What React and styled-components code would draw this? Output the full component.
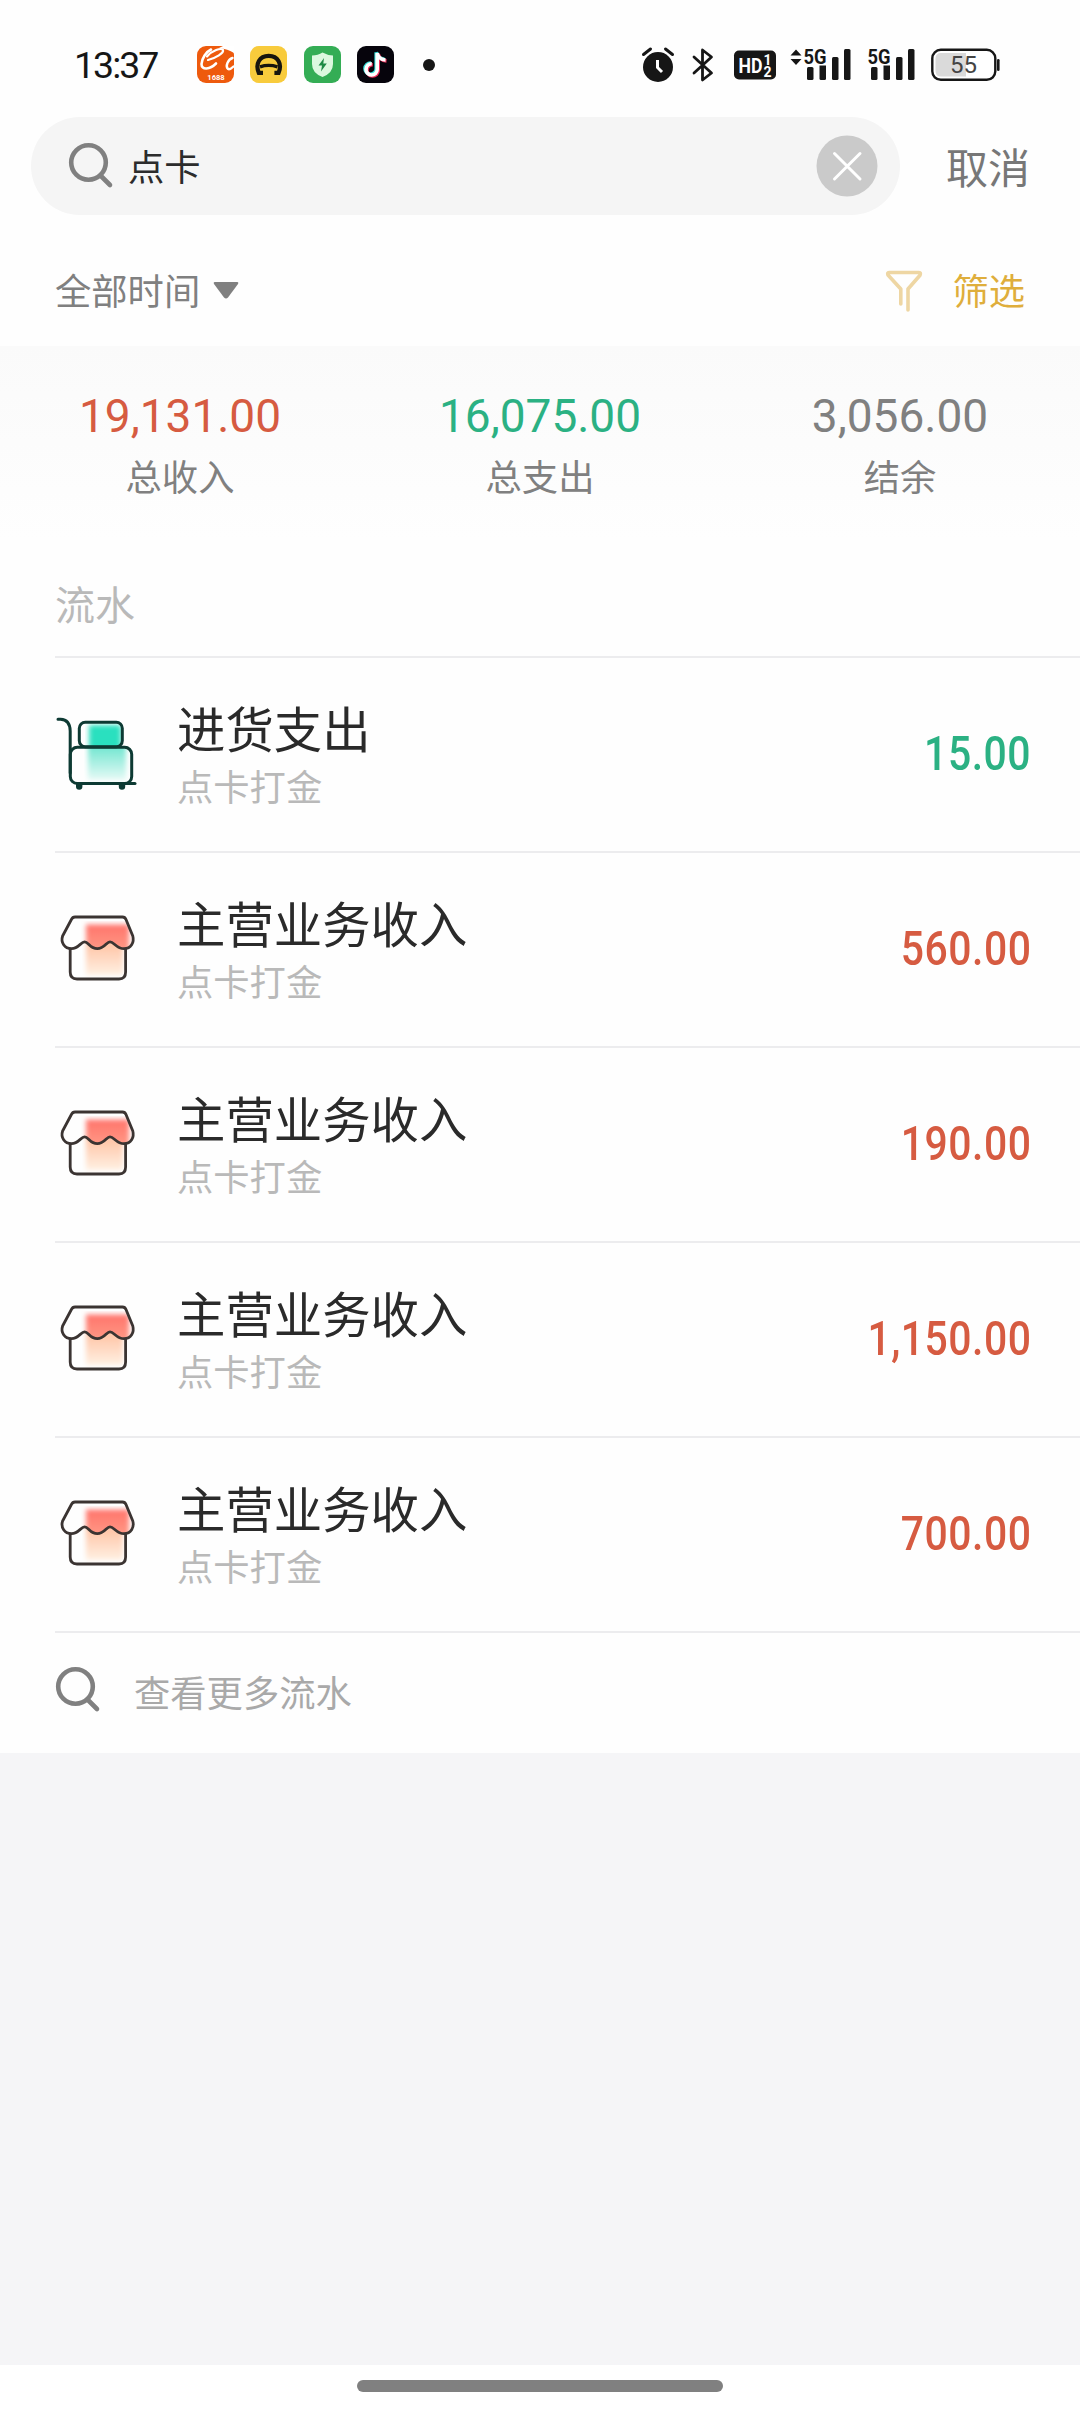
import React from 'react'
import styled, { createGlobalStyle } from 'styled-components'

const RED = '#d65b41'
const GREEN = '#2bb183'
const GREY_TEXT = '#808080'
const GREY_LIGHT = '#b9b9b9'
const INK = '#161616'
const LINE = '#ececee'

const GlobalStyle = createGlobalStyle`
  * {
    box-sizing: border-box;
  }
  body {
    margin: 0;
    background: #fff;
    font-family: Roboto, 'Noto Sans CJK SC', sans-serif;
    font-weight: 400;
  }
  svg {
    display: block;
    flex: none;
    overflow: visible;
  }
`

const Screen = styled('div')`
  display: flex;
  flex-direction: column;
  width: 1080px;
  height: 2414px;
  background: #fefefe;
  overflow: hidden;
`

const StatusBar = styled('header')`
  display: flex;
  align-items: center;
  height: 117px;
  padding: 12px 80px 0 74px;
`

const Clock = styled('span')`
  width: 123px;
  color: ${INK};
  font-size: 37.5px;
  line-height: 38px;
  letter-spacing: -2px;
`

const AppIcons = styled('div')`
  display: flex;
  align-items: center;
  gap: 16.4px;
`

const Dot = styled('i')`
  width: 12px;
  height: 12px;
  margin-left: 12px;
  border-radius: 50%;
  background: ${INK};
`

const SystemIcons = styled('div')`
  display: flex;
  align-items: center;
  margin-left: auto;
`

const SearchRow = styled('div')`
  display: flex;
  align-items: center;
  height: 98px;
  padding-left: 31px;
`

const SearchField = styled('div')`
  display: flex;
  align-items: center;
  width: 869px;
  height: 98px;
  padding: 0 22px 0 38px;
  border-radius: 49px;
  background: #f5f5f5;
`

const SearchText = styled('span')`
  flex: 1;
  margin: 6px 0 0 15px;
  color: #2c2c2c;
  font-size: 36.3px;
  line-height: 52px;
`

const Cancel = styled('span')`
  margin: 7px 0 0 46px;
  color: #777;
  font-size: 42px;
  line-height: 60px;
`

const FilterRow = styled('div')`
  display: flex;
  align-items: center;
  justify-content: space-between;
  height: 131px;
  padding: 22px 55px 0;
`

const FilterGroup = styled('div')`
  display: flex;
  align-items: center;
  gap: ${({ gap }) => gap}px;
  color: ${({ color }) => color};
`

const FilterText = styled('span')`
  margin-top: 3px;
  font-size: 36.3px;
  line-height: 52px;
`

const Summary = styled('section')`
  display: grid;
  grid-template-columns: repeat(3, 360px);
  height: 194px;
  padding-top: 40px;
  background: linear-gradient(#fafafa, #fefefe);
  text-align: center;
`

const Total = styled('div')`
  color: ${({ color }) => color};
  font-size: 46px;
  line-height: 60px;
`

const TotalLabel = styled('div')`
  margin-top: 7px;
  color: ${GREY_TEXT};
  font-size: 36.3px;
  line-height: 52px;
`

const SectionTitle = styled('h2')`
  height: 116px;
  margin: 0;
  padding: 38px 0 0 55px;
  color: ${GREY_LIGHT};
  font-size: 40px;
  font-weight: 400;
  line-height: 58px;
`

const List = styled('div')`
  margin-left: 55px;
  border-bottom: 2px solid ${LINE};
`

const Record = styled('div')`
  display: flex;
  align-items: center;
  height: 195px;
  padding-right: 49px;
  border-top: 2px solid ${LINE};
`

const IconSlot = styled('div')`
  margin: 0 1px 0 -1px;
`

const RecordText = styled('div')`
  flex: 1;
  margin-left: 38px;
  padding-top: 8px;
`

const RecordTitle = styled('div')`
  color: #2a2a2a;
  font-size: 48.4px;
  line-height: 60px;
`

const RecordNote = styled('div')`
  color: ${GREY_LIGHT};
  font-size: 36.3px;
  line-height: 53px;
`

const Amount = styled('div')`
  color: ${({ color }) => color};
  margin-top: -2px;
  font-size: 49px;
  font-weight: 500;
  line-height: 60px;
  letter-spacing: 0.6px;
  transform: scaleX(0.835);
  transform-origin: right;
`

const More = styled('div')`
  display: flex;
  align-items: center;
  height: 120px;
  padding: 0 0 6px 56px;
`

const MoreText = styled('span')`
  margin: 10px 0 0 34px;
  color: #a9a9a9;
  font-size: 36.3px;
  line-height: 52px;
`

const Filler = styled('div')`
  flex: 1;
  background: #f5f5f7;
`

const NavBar = styled('footer')`
  display: flex;
  justify-content: center;
  height: 49px;
  padding-top: 15px;
  background: #fff;
`

const NavHandle = styled('div')`
  width: 366px;
  height: 12px;
  border-radius: 6px;
  background: #808080;
`

const Spaced = styled('span')`
  display: block;
  margin-left: ${({ left }) => left}px;
`

const MagnifierIcon = () => (
  <svg width="44" height="46" viewBox="0 0 44 46" fill="none" stroke="#808080" strokeWidth="4.6">
    <circle cx="19.5" cy="19.5" r="17.3" />
    <path d="M31.5 32.5 L41 42" strokeLinecap="round" />
  </svg>
)

const ClearIcon = () => (
  <svg width="62" height="62" viewBox="0 0 62 62">
    <circle cx="31" cy="31" r="30.5" fill="#cacaca" />
    <path d="M18.5 18.5 L44 44 M44 18.5 L18.5 44" stroke="#fff" strokeWidth="3" strokeLinecap="round" />
  </svg>
)

const FunnelIcon = () => (
  <svg width="36" height="42" viewBox="0 0 36 42" fill="none" stroke="#eed6a3" strokeWidth="3.6" strokeLinejoin="round" strokeLinecap="round">
    <path d="M14.8 33 V18 L2 4 Q1 1.5 3 1.5 H33 Q35.2 1.5 34 4.2 L22 18 V39" />
  </svg>
)

const Icon1688 = () => (
  <svg width="37" height="37" viewBox="0 0 37 37">
    <rect width="37" height="37" rx="9" fill="#ee5a0d" />
    <g fill="none" stroke="#fff" strokeLinecap="round">
      <path d="M14 3.5 C9 6 5 12 4.5 18 C4.4 24.5 13 23.5 19 17.5" strokeWidth="2.6" />
      <path d="M10 10.5 C15 4.5 24 1.5 26 4 C27 7 19 12 11 14" strokeWidth="2.2" />
      <path d="M35.5 12 C31 13.5 28 20 31 23 C33 24 35 22 36.5 20.5" strokeWidth="2.4" />
    </g>
    <path d="M26 0 H37 V7 Q31 3 22 2 Z" fill="#fff" />
    <text x="19" y="33.5" fill="#fff" fontFamily="Roboto" fontSize="7.6" fontWeight="700" textAnchor="middle">1688</text>
  </svg>
)

const IconHorseshoe = () => (
  <svg width="37" height="37" viewBox="0 0 37 37">
    <rect width="37" height="37" rx="9" fill="#f8cb3c" />
    <path d="M13 26.8 H8.8 C5 18 9.5 9.8 18.7 9.8 C28 9.8 32.3 18 28.6 26.8 H24.4" fill="none" stroke="#17150e" strokeWidth="4.2" />
    <path d="M10 20.8 Q18.7 18 27.5 20.8" fill="none" stroke="#17150e" strokeWidth="3.4" />
  </svg>
)

const IconShield = () => (
  <svg width="37" height="37" viewBox="0 0 37 37">
    <rect width="37" height="37" rx="9" fill="#34ad55" />
    <path d="M18.5 6.5 Q24 9.5 29 9.5 V18 Q29 27 18.5 31 Q8 27 8 18 V9.5 Q14 9.5 18.5 6.5 Z" fill="#dcf8df" />
    <path d="M20 12 L14.5 19.5 H18 L17 25.5 L22.8 17.5 H19.3 Z" fill="#1d8a45" />
  </svg>
)

const NOTE = 'M20.2 7 V23.5 A5.6 5.6 0 1 1 14.8 17.8 M20.2 7 Q21.5 13.6 28.5 14'

const IconNote = () => (
  <svg width="37" height="37" viewBox="0 0 37 37">
    <rect width="37" height="37" rx="9" fill="#06040c" />
    <g fill="none" strokeWidth="3.6">
      <path d={NOTE} stroke="#3be0dc" transform="translate(-1 -.8)" />
      <path d={NOTE} stroke="#ee2f5b" transform="translate(1 .9)" />
      <path d={NOTE} stroke="#fff" />
    </g>
  </svg>
)

const AlarmIcon = () => (
  <svg width="32" height="36" viewBox="0 0 32 36">
    <circle cx="16" cy="20" r="15" fill={INK} />
    <path d="M1.5 7.5 L8.5 2 M30.5 7.5 L23.5 2" stroke={INK} strokeWidth="3" strokeLinecap="round" />
    <path d="M15.5 13 V20.5 L20 25" fill="none" stroke="#fff" strokeWidth="3" />
  </svg>
)

const BluetoothIcon = () => (
  <svg width="22" height="36" viewBox="0 0 22 36" fill="none" stroke={INK} strokeWidth="2.8">
    <path d="M2 10 L19.5 26 L10.5 33 V3 L19.5 10 L2 26" strokeLinejoin="round" strokeLinecap="round" />
  </svg>
)

const HdIcon = () => (
  <svg width="42" height="30" viewBox="0 0 42 30" fontFamily="Roboto" fontWeight="700">
    <rect width="42" height="29" y=".5" rx="5" fill={INK} />
    <text x="4.5" y="22.5" fill="#fff" fontSize="21" textLength="24" lengthAdjust="spacingAndGlyphs">HD</text>
    <text x="29.5" y="15" fill="#fff" fontSize="14">1</text>
    <text x="29.5" y="26.5" fill="#fff" fontSize="14">2</text>
  </svg>
)

const SignalIcon = ({ arrows = false }) => (
  <svg width={arrows ? 61 : 48} height="36" viewBox={arrows ? '-14 0 61 36' : '-1 0 48 36'} fill={INK}>
    {arrows && <path d="M-13.5 8.5 L-8 2.5 L-2.5 8.5 Z M-13.5 12 L-8 18 L-2.5 12 Z" />}
    <text x="-.5" y="16.5" fontFamily="Roboto" fontSize="21" fontWeight="700" textLength="23" lengthAdjust="spacingAndGlyphs">5G</text>
    <rect x="3" y="20" width="6.5" height="13" rx="1.5" />
    <path d="M15.5 18.5 H22 V31.5 Q22 33 20.5 33 H17 Q15.5 33 15.5 31.5 Z" />
    <rect x="28" y="10" width="6.5" height="23" rx="1.5" />
    <rect x="40" y="2" width="6.5" height="31" rx="1.5" />
  </svg>
)

const BatteryIcon = () => (
  <svg width="69" height="34" viewBox="0 0 69 34">
    <rect x="1.3" y="1.8" width="63" height="30" rx="8.5" fill="#fff" stroke={INK} strokeWidth="2.4" />
    <path d="M10 5 H35 V28.5 H10 Q4.5 28.5 4.5 23 V10.5 Q4.5 5 10 5 Z" fill="#dadada" />
    <rect x="66" y="11" width="2.6" height="12" rx="1.3" fill={INK} />
    <text x="32.5" y="25" fill="#444" fontFamily="Roboto" fontSize="24" textAnchor="middle">55</text>
  </svg>
)

const TrolleyIcon = () => (
  <svg width="84" height="85" viewBox="0 0 84 85">
    <defs>
      <linearGradient id="trolley" x1="0" y1="0" x2="0" y2="1">
        <stop offset="0" stopColor="#62e3cb" />
        <stop offset="1" stopColor="#e6faf6" />
      </linearGradient>
      <clipPath id="trolleyTop"><rect x="25.3" y="10.3" width="43" height="24.5" rx="6" /></clipPath>
      <clipPath id="trolleyBase"><rect x="16.5" y="35.3" width="61" height="36" rx="7" /></clipPath>
      <filter id="trolleySoft"><feGaussianBlur stdDeviation="2.6" /></filter>
    </defs>
    <g clipPath="url(#trolleyTop)">
      <rect x="35" y="13" width="32" height="26" fill="#2be0bf" filter="url(#trolleySoft)" />
    </g>
    <g clipPath="url(#trolleyBase)">
      <rect x="34" y="30" width="38" height="38" fill="url(#trolley)" filter="url(#trolleySoft)" />
    </g>
    <g fill="none" stroke="#0d3a33" strokeWidth="3" strokeLinecap="round">
      <path d="M4 7.3 H6.5 Q16 7.8 16.2 19 V61" />
      <rect x="25.3" y="10.3" width="43" height="24.5" rx="6" />
      <rect x="16.3" y="35.3" width="61.4" height="36.3" rx="7" />
      <path d="M24 71.6 H81" />
    </g>
    <path d="M22 72 H28.4 V74.5 A3.2 3.2 0 0 1 22 74.5 Z M64.8 72 H71.2 V74.5 A3.2 3.2 0 0 1 64.8 74.5 Z" fill="#0d3a33" />
  </svg>
)

const ROOF =
  'M21 10 H68.5 Q71 10 72 12.5 L78.8 29 C80.5 35.5 77 41.7 70 41.7 C62.5 41.7 60 34.8 56 34.8 C52.5 34.8 50.5 41.7 43.3 41.7 C36 41.7 34.5 34.8 30.6 34.8 C27 34.8 24.5 41.7 17.5 41.7 C10.5 41.7 6.5 35.5 8.6 29 L17.4 12.5 Q18.5 10 21 10 Z'
const WALLS = 'M16.2 41.5 V65 Q16.2 72 23 72 H65 Q71.6 72 71.6 65 V41.5'

const StoreIcon = () => (
  <svg width="84" height="85" viewBox="0 0 84 85">
    <defs>
      <linearGradient id="storeWall" x1="0" y1="0" x2="0" y2="1">
        <stop offset="0" stopColor="#ffc0a0" />
        <stop offset="1" stopColor="#fff0e2" />
      </linearGradient>
      <linearGradient id="storeRoof" x1="0" y1="0" x2="0" y2="1">
        <stop offset="0" stopColor="#ff746b" />
        <stop offset="1" stopColor="#ff9c88" />
      </linearGradient>
      <clipPath id="storeRoofClip"><path d={ROOF} /></clipPath>
      <clipPath id="storeWallClip"><path d="M16 35 H72 V72 H16 Z" /></clipPath>
      <filter id="storeSoft"><feGaussianBlur stdDeviation="2.8" /></filter>
    </defs>
    <g clipPath="url(#storeWallClip)">
      <rect x="32" y="34" width="37" height="34" fill="url(#storeWall)" filter="url(#storeSoft)" />
    </g>
    <g clipPath="url(#storeRoofClip)">
      <rect x="32" y="17.5" width="43" height="28" fill="url(#storeRoof)" filter="url(#storeSoft)" />
    </g>
    <g fill="none" stroke="#3b3432" strokeWidth="2.8" strokeLinejoin="round">
      <path d={ROOF} />
      <path d={WALLS} />
    </g>
  </svg>
)

const totals = [
  { value: '19,131.00', label: '总收入', color: RED },
  { value: '16,075.00', label: '总支出', color: GREEN },
  { value: '3,056.00', label: '结余', color: GREY_TEXT },
]

const records = [
  { id: 1, title: '进货支出', note: '点卡打金', amount: '15.00', expense: true },
  { id: 2, title: '主营业务收入', note: '点卡打金', amount: '560.00' },
  { id: 3, title: '主营业务收入', note: '点卡打金', amount: '190.00' },
  { id: 4, title: '主营业务收入', note: '点卡打金', amount: '1,150.00' },
  { id: 5, title: '主营业务收入', note: '点卡打金', amount: '700.00' },
]

const App = () => (
  <>
    <GlobalStyle />
    <Screen lang="zh-CN">
      <StatusBar>
        <Clock>13:37</Clock>
        <AppIcons>
          <Icon1688 />
          <IconHorseshoe />
          <IconShield />
          <IconNote />
          <Dot />
        </AppIcons>
        <SystemIcons>
          <AlarmIcon />
          <Spaced left={18}><BluetoothIcon /></Spaced>
          <Spaced left={20}><HdIcon /></Spaced>
          <Spaced left={14}><SignalIcon arrows /></Spaced>
          <Spaced left={16}><SignalIcon /></Spaced>
          <Spaced left={16}><BatteryIcon /></Spaced>
        </SystemIcons>
      </StatusBar>
      <SearchRow>
        <SearchField>
          <MagnifierIcon />
          <SearchText>点卡</SearchText>
          <ClearIcon />
        </SearchField>
        <Cancel>取消</Cancel>
      </SearchRow>
      <FilterRow>
        <FilterGroup gap={13} color={GREY_TEXT}>
          <FilterText>全部时间</FilterText>
          <svg width="26" height="18" viewBox="0 0 26 18">
            <path d="M1.5 -1 H24.5 Q26 -.5 25 1 L15 14.5 Q13 16.5 11 14.5 L1 1 Q0 -.5 1.5 -1 Z" fill="#808080" />
          </svg>
        </FilterGroup>
        <FilterGroup gap={30} color="#dfae3c">
          <FunnelIcon />
          <FilterText>筛选</FilterText>
        </FilterGroup>
      </FilterRow>
      <Summary>
        {totals.map(({ value, label, color }) => (
          <div key={label}>
            <Total color={color}>{value}</Total>
            <TotalLabel>{label}</TotalLabel>
          </div>
        ))}
      </Summary>
      <SectionTitle>流水</SectionTitle>
      <List>
        {records.map(({ id, title, note, amount, expense }) => (
          <Record key={id}>
            <IconSlot>{expense ? <TrolleyIcon /> : <StoreIcon />}</IconSlot>
            <RecordText>
              <RecordTitle>{title}</RecordTitle>
              <RecordNote>{note}</RecordNote>
            </RecordText>
            <Amount color={expense ? GREEN : RED}>{amount}</Amount>
          </Record>
        ))}
      </List>
      <More>
        <MagnifierIcon />
        <MoreText>查看更多流水</MoreText>
      </More>
      <Filler />
      <NavBar>
        <NavHandle />
      </NavBar>
    </Screen>
  </>
)

export default App
